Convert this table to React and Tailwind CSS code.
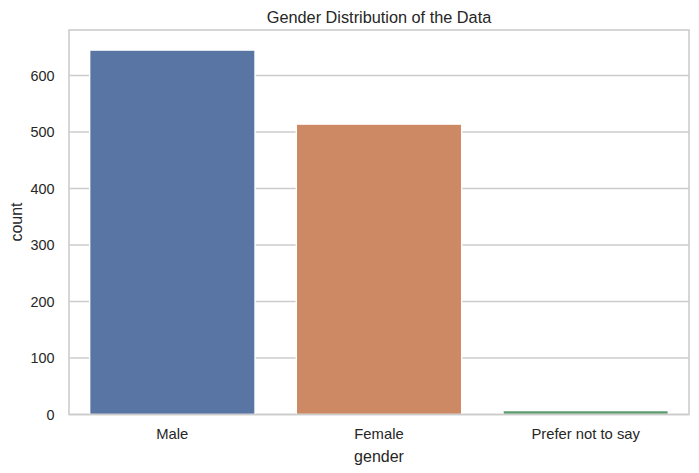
const ZERO = 414.5;
const PX_PER_UNIT = 0.565;
const LEFT = 69;
const RIGHT = 689;
const TOP = 30;

const bars = [
    { label: 'Male', count: 645, color: '#5975a4' },
    { label: 'Female', count: 514, color: '#cc8963' },
    { label: 'Prefer not to say', count: 7, color: '#5f9e6e' },
];

const ticks = [0, 100, 200, 300, 400, 500, 600];

export default function App() {
    const slot = (RIGHT - LEFT) / bars.length;
    const barWidth = slot * 0.8;
    const y = (v) => ZERO - v * PX_PER_UNIT;

    return (
        <div className="w-[699px] h-[473px] bg-white overflow-hidden">
            <svg width="699" height="473" viewBox="0 0 699 473" className="block font-['Liberation_Sans',Arial,sans-serif]">
                {/* Title */}
                <text x="379" y="22.5" textAnchor="middle" fontSize="16.3" fill="#262626">
                    Gender Distribution of the Data
                </text>

                {/* Grid */}
                {ticks.map((t) => (
                    <line key={t} x1={LEFT} x2={RIGHT} y1={y(t)} y2={y(t)} stroke="#cccccc" strokeWidth="1.3" />
                ))}

                {/* Bars */}
                {bars.map((b, i) => {
                    const cx = LEFT + slot * (i + 0.5);
                    return (
                        <rect
                            key={b.label}
                            x={cx - barWidth / 2}
                            y={y(b.count)}
                            width={barWidth}
                            height={ZERO - y(b.count)}
                            fill={b.color}
                            stroke="#ffffff"
                            strokeWidth="1.4"
                        />
                    );
                })}

                {/* Spines */}
                <rect x={LEFT} y={TOP} width={RIGHT - LEFT} height={ZERO - TOP} fill="none" stroke="#cccccc" strokeWidth="1.6" />

                {/* Y tick labels */}
                {ticks.map((t) => (
                    <text key={t} x="54.5" y={y(t) + 5.2} textAnchor="end" fontSize="14.4" fill="#262626">
                        {t}
                    </text>
                ))}

                {/* X tick labels */}
                {bars.map((b, i) => (
                    <text key={b.label} x={LEFT + slot * (i + 0.5)} y="439.3" textAnchor="middle" fontSize="14.8" fill="#262626">
                        {b.label}
                    </text>
                ))}

                {/* Axis labels */}
                <text x="379" y="461.7" textAnchor="middle" fontSize="16" fill="#262626">
                    gender
                </text>
                <text x="21.5" y="222" textAnchor="middle" fontSize="16" fill="#262626" transform="rotate(-90 21.5 222)">
                    count
                </text>
            </svg>
        </div>
    );
}
